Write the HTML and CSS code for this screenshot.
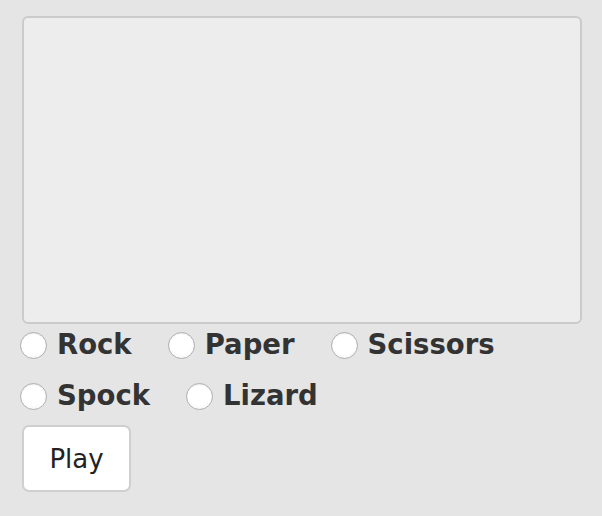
FILE: index.html
```html
<!DOCTYPE html>
<html>
<head>
<meta charset="utf-8">
<link rel="stylesheet" href="styles.css">
</head>
<body>
<div class="page">
  <div class="display"></div>
  <div class="choices">
    <div class="row">
      <label class="choice"><input type="radio" name="c" class="radio"><span class="label">Rock</span></label>
      <label class="choice"><input type="radio" name="c" class="radio"><span class="label">Paper</span></label>
      <label class="choice"><input type="radio" name="c" class="radio"><span class="label">Scissors</span></label>
    </div>
    <div class="row">
      <label class="choice"><input type="radio" name="c" class="radio"><span class="label">Spock</span></label>
      <label class="choice"><input type="radio" name="c" class="radio"><span class="label">Lizard</span></label>
    </div>
  </div>
  <button class="play">Play</button>
</div>
</body>
</html>
```
FILE: styles.css
```css
html, body {
  margin: 0;
  padding: 0;
  background: #e5e5e5;
}
.page {
  padding: 16px 0 0 20px;
  font-family: "DejaVu Sans", Verdana, sans-serif;
  color: #333;
}
.display {
  margin-left: 2px;
  width: 556px;
  height: 304px;
  background: #ededed;
  border: 2px solid #cbcbcb;
  border-radius: 6px;
}
.choices {
  display: flex;
  flex-direction: column;
}
.row {
  display: flex;
  align-items: center;
  height: 51px;
  gap: 36px;
}
.row:first-child {
  margin-top: -4px;
}
.choice {
  display: flex;
  align-items: center;
  gap: 10px;
  font-weight: bold;
  font-size: 27.5px;
}
.label {
  padding-bottom: 4px;
}
.radio {
  appearance: none;
  -webkit-appearance: none;
  margin: 0;
  width: 27px;
  height: 27px;
  border-radius: 50%;
  border: 1px solid #b0b0b0;
  background: radial-gradient(circle at 50% 40%, #ffffff 55%, #f0f0f0 100%);
  box-shadow: inset 0 1px 1px rgba(0,0,0,0.08);
}
.play {
  margin: 3px 0 0 2px;
  width: 109px;
  height: 67px;
  background: #fff;
  border: 2px solid #cfcfcf;
  border-radius: 7px;
  font-family: "DejaVu Sans", Verdana, sans-serif;
  font-size: 26px;
  color: #222;
  padding: 0;
}
```
